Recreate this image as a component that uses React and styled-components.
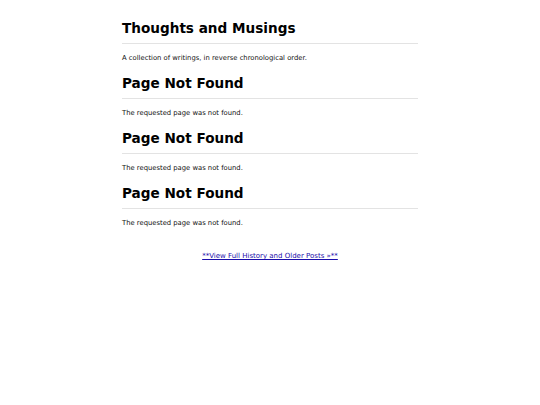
import React from "react";
import styled, { createGlobalStyle } from "styled-components";

const Global = createGlobalStyle`
  html, body {
    margin: 0;
    padding: 0;
    background: #fff;
  }
  body {
    font-family: "DejaVu Sans", Verdana, sans-serif;
    color: #111;
  }
`;

const Page = styled.main`
  width: 296px;
  margin: 0 auto;
  padding-top: 19px;
`;

const Section = styled.section`
  margin-bottom: 11px;
`;

const Heading = styled.h2`
  margin: 0 0 10px;
  padding-bottom: 6px;
  border-bottom: 1px solid #e3e3e3;
  font-size: 13.6px;
  line-height: 18px;
  font-weight: bold;
  color: #000;
`;

const Text = styled.p`
  margin: 0;
  font-size: 6.8px;
  line-height: 9px;
  color: #111;
`;

const Footer = styled.div`
  margin-top: 24px;
  text-align: center;
  font-size: 7px;
  line-height: 9px;
`;

const Link = styled.a`
  color: #1a0dab;
  text-decoration: underline;
`;

const posts = [
  { title: "Thoughts and Musings", body: "A collection of writings, in reverse chronological order." },
  { title: "Page Not Found", body: "The requested page was not found." },
  { title: "Page Not Found", body: "The requested page was not found." },
  { title: "Page Not Found", body: "The requested page was not found." },
];

const App = () => (
  <>
    <Global />
    <Page>
      {posts.map((p, i) => (
        <Section key={i}>
          <Heading>{p.title}</Heading>
          <Text>{p.body}</Text>
        </Section>
      ))}
      <Footer>
        <Link href="#">**View Full History and Older Posts »**</Link>
      </Footer>
    </Page>
  </>
);

export default App;
